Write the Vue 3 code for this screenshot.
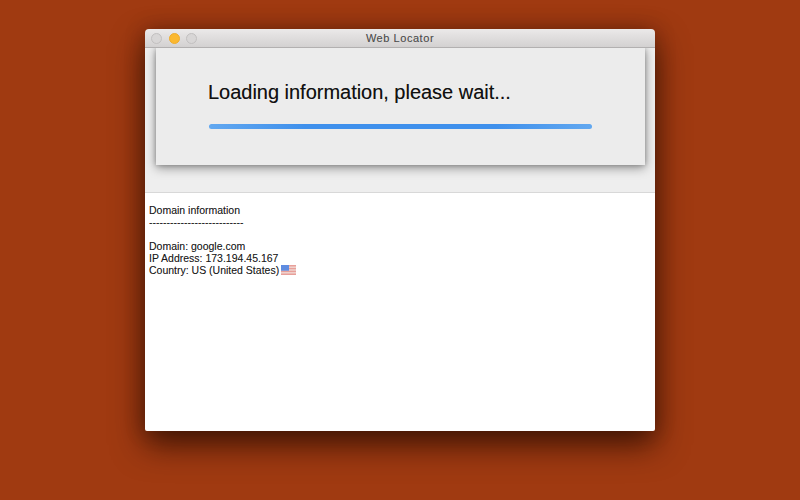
<script setup>
const lines = ['Domain: google.com', 'IP Address: 173.194.45.167']
</script>

<template>
  <main class="desktop">
    <section class="window">
      <header class="titlebar">
        <div class="lights">
          <span class="light"></span>
          <span class="light amber"></span>
          <span class="light"></span>
        </div>
        <span class="title">Web Locator</span>
      </header>
      <div class="toolbar">
        <div class="sheet">
          <h1 class="message">Loading information, please wait...</h1>
          <div class="progress"></div>
        </div>
      </div>
      <div class="content">
        <div>Domain information</div>
        <div class="dashes">---------------------------</div>
        <div class="spacer"></div>
        <div v-for="line in lines" :key="line">{{ line }}</div>
        <div class="country">
          Country: US (United States)
          <svg class="flag" width="15" height="10" viewBox="0 0 15 10">
            <rect width="15" height="10" fill="#e8a09a" />
            <rect y="1.5" width="15" height="1.4" fill="#f0d6d2" />
            <rect y="4.3" width="15" height="1.4" fill="#f0d6d2" />
            <rect y="7.1" width="15" height="1.4" fill="#f0d6d2" />
            <rect width="8" height="5.7" fill="#5f8ce0" />
          </svg>
        </div>
      </div>
    </section>
  </main>
</template>

<style>
html, body { margin: 0; background: #a03a11; }
</style>

<style scoped>
.desktop {
  width: 800px;
  height: 500px;
  box-sizing: border-box;
  padding: 29px 145px 69px;
  background: #a03a11;
  overflow: hidden;
  font-family: "Liberation Sans", Arial, sans-serif;
}
.window {
  height: 402px;
  display: flex;
  flex-direction: column;
  border-radius: 4px 4px 2px 2px;
  box-shadow: 0 14px 32px rgba(30, 8, 0, 0.72), 0 0 20px rgba(40, 15, 0, 0.3);
}
.titlebar {
  height: 18px;
  flex: none;
  position: relative;
  display: flex;
  align-items: center;
  justify-content: center;
  border-radius: 4px 4px 0 0;
  background: linear-gradient(#ebe9e9, #d3d1d1);
  border-bottom: 1px solid #b2b0b0;
  z-index: 2;
}
.lights {
  position: absolute;
  left: 6px;
  top: 4px;
  display: flex;
  gap: 6.5px;
}
.light {
  width: 11px;
  height: 11px;
  box-sizing: border-box;
  border-radius: 50%;
  background: #d8d6d6;
  border: 1px solid #c2c0c0;
}
.amber {
  background: #fbb82f;
  border-color: #eeac2c;
}
.title {
  font-size: 11px;
  letter-spacing: 0.55px;
  color: #4f4f4f;
  text-shadow: 0 0 0.5px rgba(60, 60, 60, 0.3);
}
.toolbar {
  height: 145px;
  flex: none;
  box-sizing: border-box;
  padding: 0 10px 0 11px;
  background: #eeeeee;
  border-bottom: 1px solid #d8d8d8;
}
.sheet {
  height: 117px;
  box-sizing: border-box;
  padding: 32px 53px 0 53px;
  background: #ececec;
  box-shadow: 0 3px 10px rgba(0, 0, 0, 0.38), 0 0 5px rgba(0, 0, 0, 0.26);
}
.message {
  margin: 0 0 0 -1px;
  font-size: 20px;
  font-weight: 400;
  line-height: 24px;
  color: #111;
  letter-spacing: -0.02px;
  text-shadow: 0 0 0.6px rgba(0, 0, 0, 0.4);
}
.progress {
  height: 5px;
  margin-top: 20px;
  border-radius: 3px;
  background: linear-gradient(90deg, #62a8f0, #3f90ec 25%, #3f90ec 75%, #62a8f0);
}
.content {
  flex: 1;
  padding: 11px 0 0 4px;
  background: #fff;
  border-radius: 0 0 2px 2px;
  font-size: 10.5px;
  line-height: 12px;
  color: #1c1c1c;
  text-shadow: 0 0 0.5px rgba(0, 0, 0, 0.3);
}
.spacer { height: 12px; }
.flag {
  vertical-align: -1px;
  margin-left: -1px;
}
</style>
